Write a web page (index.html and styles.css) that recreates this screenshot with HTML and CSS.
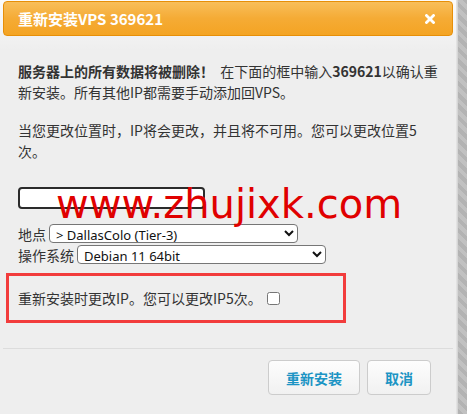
FILE: index.html
```html
<!DOCTYPE html>
<html lang="zh-CN">
<head>
    <meta charset="UTF-8">
    <title>重新安装VPS 369621</title>
    <link rel="stylesheet" href="styles.css">
</head>
<body>
    <div class="page">
        <div class="dialog">
            <div class="dialog-titlebar">
                <span class="dialog-title">重新安装VPS 369621</span>
                <span class="dialog-close">
                    <svg width="10" height="10" viewBox="0 0 10 10">
                        <path d="M1.5 1.5 L8.5 8.5 M8.5 1.5 L1.5 8.5" stroke="#fff" stroke-width="2.8" stroke-linecap="square"/>
                    </svg>
                </span>
            </div>

            <div class="dialog-content">
                <p><b>服务器上的所有数据将被删除！</b>&nbsp; 在下面的框中输入<b>369621</b>以确认重新安装。所有其他IP都需要手动添加回VPS。</p>
                <p>当您更改位置时，IP将会更改，并且将不可用。您可以更改位置5次。</p>

                <div class="confirm-row">
                    <input type="text" class="confirm-input">
                </div>

                <div class="field-row">
                    <label>地点</label>
                    <select class="loc-select">
                        <option>&gt; DallasColo (Tier-3)</option>
                    </select>
                </div>
                <div class="field-row">
                    <label>操作系统</label>
                    <select class="os-select">
                        <option>Debian 11 64bit</option>
                    </select>
                </div>

                <div class="ip-box">
                    <span>重新安装时更改IP。您可以更改IP5次。</span>
                    <input type="checkbox" class="ip-check">
                </div>

                <div class="watermark">www.zhujixk.com</div>
            </div>

            <div class="dialog-buttons">
                <button class="btn">重新安装</button>
                <button class="btn">取消</button>
            </div>
        </div>
        <div class="side-strip"></div>
    </div>
</body>
</html>
```

FILE: styles.css
```css
body {
    margin: 0;
    padding: 0;
    background-color: #eeeeee;
    font-family: "Noto Sans CJK SC", "Noto Sans", sans-serif;
    font-size: 14px;
    color: #333;
    overflow: hidden;
}

.page {
    display: flex;
    height: 414px;
}

.dialog {
    width: 450px;
    padding: 1px 3px 0 3px;
    background: linear-gradient(#fbfbfb, #eeeeee 50px);
    border-right: 1px solid #e2e2e2;
}

.side-strip {
    flex: 1;
    background: repeating-linear-gradient(45deg, #b3b3b3 0 4px, #c1c1c1 4px 8px);
    border-left: 1px solid #d6d6d6;
}

.dialog-titlebar {
    display: flex;
    justify-content: space-between;
    align-items: center;
    height: 33px;
    padding: 0 14px;
    border: 1px solid #e78f08;
    border-radius: 4px;
    background: linear-gradient(#f8be5a, #f5ab35 50%, #f4a423);
}

.dialog-title {
    color: #fff;
    font-weight: bold;
    font-size: 15px;
}

.dialog-close {
    display: flex;
    margin-right: 3px;
}

.dialog-content {
    position: relative;
    padding: 25px 15px 0 15px;
}

.dialog-content p {
    margin: 0 0 17px;
    line-height: 21px;
}

.confirm-row {
    margin-top: 24px;
    height: 22px;
}

.confirm-input {
    box-sizing: border-box;
    width: 187px;
    height: 22px;
    margin: 0;
    border: 2px solid #2b2b2b;
    border-radius: 4px;
    background: #fff;
    outline: none;
}

.field-row {
    display: flex;
    align-items: center;
    height: 19px;
    margin-top: 2px;
}

.confirm-row + .field-row {
    margin-top: 16px;
}

.field-row label {
    margin-right: 3px;
    color: #333;
}

.field-row select {
    box-sizing: border-box;
    height: 19px;
    padding: 0 2px;
    border: 1px solid #767676;
    border-radius: 4px;
    background: #fff;
    font-family: "Noto Sans", sans-serif;
    font-size: 13px;
    color: #111;
}

.loc-select {
    width: 249px;
}

.os-select {
    width: 249px;
}

.ip-box {
    display: flex;
    align-items: center;
    box-sizing: border-box;
    width: 340px;
    height: 50px;
    margin: 9px 0 0 -12px;
    padding: 0 0 0 9px;
    border: 3px solid #f23c3c;
}

.ip-check {
    width: 13px;
    height: 13px;
    margin: 0 0 0 5px;
}

.watermark {
    position: absolute;
    left: 53px;
    top: 148px;
    font-family: "DejaVu Sans", sans-serif;
    font-size: 40px;
    line-height: 1;
    color: #e00000;
    pointer-events: none;
}

.dialog-buttons {
    display: flex;
    justify-content: flex-end;
    gap: 7px;
    margin-top: 25px;
    padding: 11px 22px 0 0;
    border-top: 1px solid #dcdcdc;
}

.btn {
    height: 35px;
    padding: 0 17px;
    border: 1px solid #cccccc;
    border-radius: 4px;
    background: linear-gradient(#fdfdfd, #f1f1f1);
    font-family: "Noto Sans CJK SC", sans-serif;
    font-size: 14px;
    font-weight: bold;
    color: #1c94c4;
    cursor: pointer;
}
```
